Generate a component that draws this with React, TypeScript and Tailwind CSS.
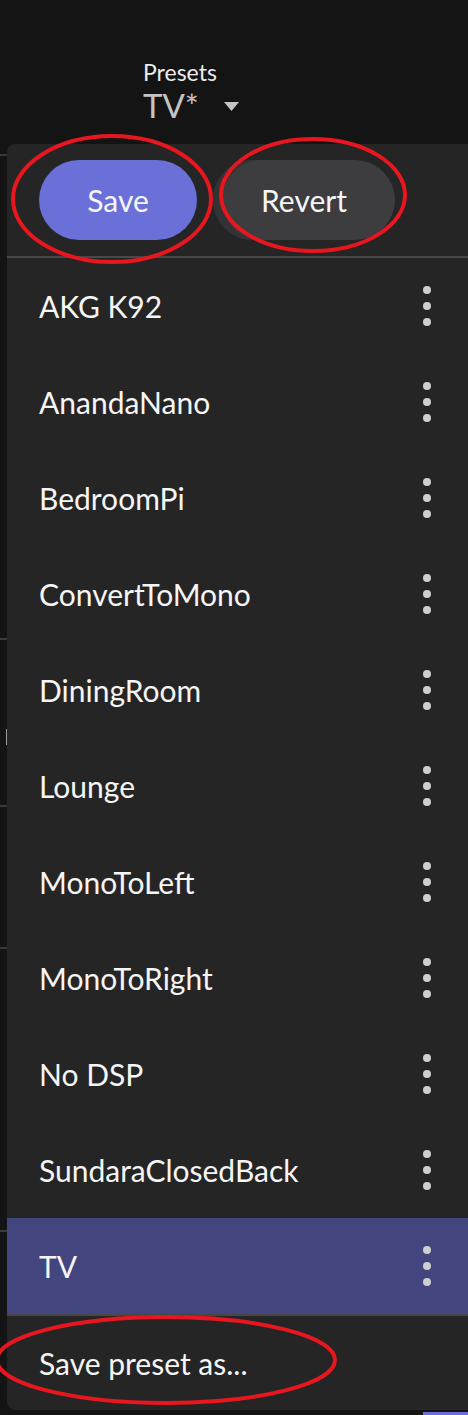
import React from "react";

const presets = [
  "AKG K92",
  "AnandaNano",
  "BedroomPi",
  "ConvertToMono",
  "DiningRoom",
  "Lounge",
  "MonoToLeft",
  "MonoToRight",
  "No DSP",
  "SundaraClosedBack",
  "TV",
];

const activePreset = "TV";

function MoreDots() {
  return (
    <div className="flex flex-col items-center gap-2 w-8">
      <span className="w-2 h-2 rounded-full bg-[#cfcfcf]" />
      <span className="w-2 h-2 rounded-full bg-[#cfcfcf]" />
      <span className="w-2 h-2 rounded-full bg-[#cfcfcf]" />
    </div>
  );
}

function PresetRow({ name }: { name: string }) {
  const active = name === activePreset;
  return (
    <div
      className={
        "h-[96px] flex items-center justify-between pl-[32px] pr-[25px] " +
        (active ? "bg-[#43457e]" : "")
      }
    >
      <span className="text-[30px] leading-[1.2] text-[#f5f5f5]">{name}</span>
      <MoreDots />
    </div>
  );
}

// red marker rings drawn over the screenshot
function Annotations() {
  return (
    <svg
      className="absolute inset-0 pointer-events-none"
      width="468"
      height="1415"
      viewBox="0 0 468 1415"
    >
      <g fill="none" stroke="#e8161e" strokeWidth="4">
        <ellipse cx="112" cy="199" rx="99" ry="63" />
        <ellipse cx="313" cy="195" rx="92" ry="56" />
        <ellipse cx="166" cy="1360" rx="169" ry="43" />
      </g>
    </svg>
  );
}

export default function App() {
  return (
    <div
      className="relative w-full h-[1415px] overflow-hidden bg-[#141414] flex flex-col"
      style={{ fontFamily: "Lato, 'Noto Sans', sans-serif" }}
    >
      {/* Header */}
      <header className="h-[144px] shrink-0 pl-[143px] pt-[59px]">
        <div className="text-[23px] leading-[1.2] text-[#ececec]">Presets</div>
        <div className="flex items-center gap-[25px] -mt-[1px]">
          <span className="text-[33px] leading-[1.2] text-[#c4c4c4]">TV*</span>
          <svg width="15" height="9" viewBox="0 0 15 9" className="mt-[2px]">
            <path d="M0 0h15L7.5 9z" fill="#c4c4c4" />
          </svg>
        </div>
      </header>

      <div className="flex flex-1 min-h-0">
        {/* page behind the menu */}
        <div className="w-[7px] shrink-0 flex flex-col">
          <div className="h-[10px]" />
          <div className="h-[2px] bg-[#3a3a3a]" />
          <div className="h-[482px]" />
          <div className="h-[2px] bg-[#3a3a3a]" />
          <div className="h-[89px]" />
          <div className="h-[16px] ml-[6px] w-[1px] bg-[#9a9a9a]" />
          <div className="h-[60px]" />
          <div className="h-[2px] bg-[#3a3a3a]" />
          <div className="h-[140px]" />
          <div className="h-[2px] bg-[#3a3a3a]" />
          <div className="h-[281px]" />
          <div className="h-[2px] bg-[#3a3a3a]" />
        </div>

        {/* Dropdown panel */}
        <div className="flex-1 flex flex-col">
          <div className="h-[1266px] bg-[#252525] rounded-l-[8px] flex flex-col overflow-hidden">
            <div className="h-[112px] shrink-0 flex items-center pl-[32px]">
              <button className="w-[158px] h-[80px] rounded-full bg-[#6b70d9] text-[30px] leading-[1.2] text-[#f5f5f5]">
                Save
              </button>
              <button className="ml-[16px] w-[182px] h-[80px] rounded-full bg-[#3d3d3f] shadow-[inset_9px_0_0_0_#333335] text-[30px] leading-[1.2] text-[#f5f5f5]">
                Revert
              </button>
            </div>
            <div className="h-[2px] shrink-0 bg-[#474747]" />

            {presets.map((p) => (
              <PresetRow key={p} name={p} />
            ))}

            <div className="h-[2px] shrink-0 bg-[#474747]" />
            <div className="h-[94px] flex items-center pl-[32px]">
              <span className="text-[30px] leading-[1.2] text-[#f5f5f5]">
                Save preset as...
              </span>
            </div>
          </div>
          <div className="flex-1 flex justify-end items-end">
            <div className="w-[45px] h-[3px] bg-[#6b70d9]" />
          </div>
        </div>
      </div>

      <Annotations />
    </div>
  );
}
